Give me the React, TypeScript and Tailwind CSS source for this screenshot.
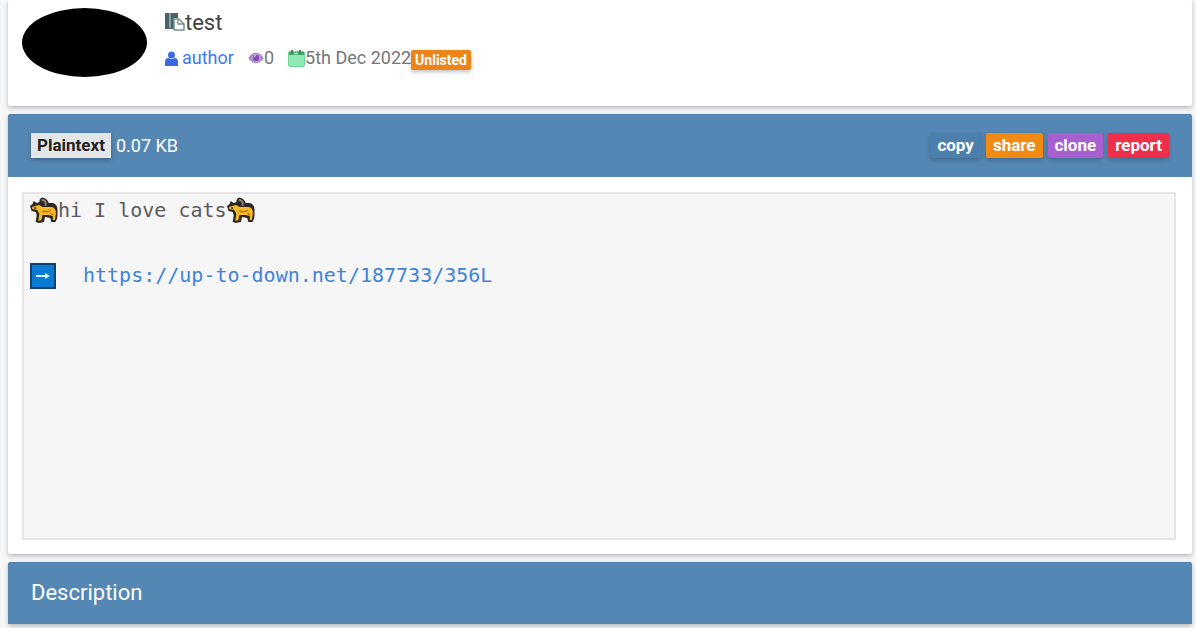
import React from "react";

function PasteIcon() {
  return (
    <svg viewBox="0 0 20 20" className="h-5 w-5 shrink-0" aria-hidden="true">
      <path d="M0 1h13v5H9v11H0z" fill="#48636a" />
      <path d="M4 1h2v15H4z" fill="#8ba0a2" />
      <path d="M9 7h5l5 5v6H9z" fill="#fff" stroke="#769790" strokeWidth="1.6" strokeLinejoin="round" />
      <path d="M13 7v5h6" fill="none" stroke="#769790" strokeWidth="1.4" />
    </svg>
  );
}

function UserIcon() {
  return (
    <svg viewBox="0 0 13 15" className="h-[15px] w-[13px] shrink-0" aria-hidden="true">
      <circle cx="6.5" cy="4" r="3.500" fill="#3b69e2" />
      <path d="M0 15v-4q0-4 3.500-4 3 2 6 0Q13 7 13 11v4z" fill="#3b69e2" />
    </svg>
  );
}

function EyeIcon() {
  return (
    <svg viewBox="0 0 18 14" className="h-3 w-4 shrink-0" aria-hidden="true">
      <path d="M0 7Q4 1 9 1t9 6q-4 6-9 6T0 7z" fill="#ad83cf" />
      <circle cx="9" cy="7" r="5" fill="#d9c2ea" />
      <circle cx="9" cy="7" r="4" fill="#8350b0" />
      <path d="M7 6q0-2 2-2" fill="none" stroke="#eee" />
    </svg>
  );
}

function CalendarIcon() {
  return (
    <svg viewBox="0 0 17 18" className="h-[18px] w-[17px] shrink-0" aria-hidden="true">
      <rect x=".5" y="2.500" width="16" height="15" rx="1.500" fill="#8ee9b2" stroke="#6fd298" />
      <path d="M1 3h15v3H1z" fill="#43a66c" />
      <path d="M4 1v4M12 1v4" stroke="#3f8b60" strokeWidth="2" />
      <path d="M6 4.500h4" stroke="#a9f0c4" strokeWidth="1.500" />
    </svg>
  );
}

function CatIcon() {
  return (
    <svg viewBox="0 0 27 27" className="h-[27px] w-[28px] shrink-0" preserveAspectRatio="none" role="img" aria-label="cat">
      <path
        d="M9 5Q9 1 12 .500q5 1 6 5.500h4q4 1 4.500 6v7q0 3-2 6h-4l-1-4-5-1-1 5-5 1-3-1 1-7-1-3-4-1-1.500-5 2.500-2 1-3 3 2z"
        fill="#2d2922"
      />
      <path
        d="M2 10l3-1 4-1 3 2h9q4 1 4 6l-1 7-2 0 0-4-4-1-6 0-1 5-3 1 1-7-2-4-5-1z"
        fill="#f5b92b"
      />
      <path d="M12 3q4 1 3 5" fill="none" stroke="#8a7d77" strokeWidth="2" strokeLinecap="round" />
      <path d="M12 14q5 2 8-1M20 16l2 2" fill="none" stroke="#bd7516" strokeWidth="1.500" />
      <circle cx="5" cy="11" r="1" fill="#2d2922" />
    </svg>
  );
}

function ArrowIcon() {
  return (
    <svg viewBox="0 0 26 26" className="h-[26px] w-[26px] shrink-0" role="img" aria-label="right arrow">
      <rect width="26" height="26" fill="#123f70" />
      <rect x="2" y="2" width="22" height="22" fill="#087bd3" />
      <path d="M6 12h9v-2l5 3-5 3v-2H6z" fill="#d7efff" />
    </svg>
  );
}

const actions = [
  { label: "copy", tone: "bg-[#4c7fae]" },
  { label: "share", tone: "bg-[#f08a13]" },
  { label: "clone", tone: "bg-[#a85fd0]" },
  { label: "report", tone: "bg-[#ee2f4c]" },
];

const card = "rounded-xs bg-white shadow-[0_2px_4px_rgba(0,0,0,0.25)]";

export default function App() {
  return (
    <main className="flex min-h-screen flex-col gap-2 overflow-hidden bg-[#f5f6f8] pr-1 pl-2 font-['Roboto',sans-serif]">
      <header className={`${card} flex gap-[18px] px-[14px] pt-2 pb-[29px]`}>
        <div className="h-[69px] w-[125px] shrink-0 rounded-[50%] bg-black" role="img" aria-label="Author avatar" />
        <div className="flex flex-col gap-2">
          <h1 className="flex h-7 items-center text-[22px] text-[#424242]">
            <PasteIcon />
            test
          </h1>
          <div className="flex h-7 items-center text-lg text-[#767676]">
            <a href="#author" className="mr-[14px] flex items-center gap-1 text-[#4278e8]">
              <UserIcon />
              author
            </a>
            <span className="mr-[14px] flex items-center">
              <EyeIcon />0
            </span>
            <span className="flex items-center">
              <CalendarIcon />
              5th Dec 2022
            </span>
            <span className="mt-1 rounded-xs bg-[#ec8519] px-1 text-sm leading-5 font-bold text-white shadow-[0_2px_4px_rgba(0,0,0,0.25)]">
              Unlisted
            </span>
          </div>
        </div>
      </header>

      <section className={card}>
        <div className="flex items-center justify-between rounded-t-xs bg-[#5487b3] py-[19px] pr-[23px] pl-[23px] text-white">
          <div className="flex items-center gap-[5px] text-lg leading-6">
            <span className="bg-[#e4e5e6] px-[6px] text-[17px] leading-[25px] font-bold text-[#222] shadow-[0_2px_4px_rgba(0,0,0,0.25)]">
              Plaintext
            </span>
            <span>0.07 KB</span>
          </div>
          <div className="flex gap-[5px]">
            {actions.map((action) => (
              <button
                key={action.label}
                type="button"
                className={`${action.tone} rounded-xs px-[7px] text-[17px] leading-[25px] font-bold text-white shadow-[0_2px_4px_rgba(0,0,0,0.2)]`}
              >
                {action.label}
              </button>
            ))}
          </div>
        </div>
        <div className="pt-[15px] pr-4 pb-[14px] pl-[14px]">
          <div className="min-h-[348px] border-2 border-[#e6e4e4] bg-[#f6f6f7] px-[6px] font-['DejaVu_Sans_Mono',monospace] text-xl leading-[33px] text-[#5a5a5a]">
            <p className="flex h-8 items-center">
              <CatIcon />
              <span>hi I love cats</span>
              <CatIcon />
            </p>
            <p className="mt-[33px] flex h-[33px] items-center gap-[27px]">
              <ArrowIcon />
              <a href="https://up-to-down.net/187733/356L" className="text-[#3f83d8]">
                https://up-to-down.net/187733/356L
              </a>
            </p>
          </div>
        </div>
      </section>

      <section className={card}>
        <h2 className="rounded-t-xs bg-[#5487b3] px-[23px] py-[17px] text-[22px] leading-7 text-white">Description</h2>
      </section>
    </main>
  );
}
